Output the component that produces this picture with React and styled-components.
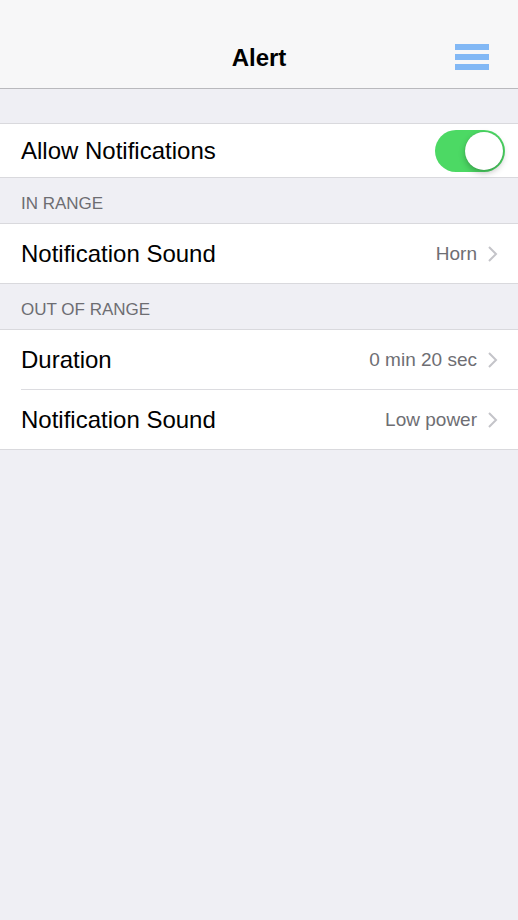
import React from "react";
import styled, { createGlobalStyle } from "styled-components";

const GlobalStyle = createGlobalStyle`
  html, body {
    margin: 0;
    padding: 0;
    background: #efeff4;
    font-family: "Liberation Sans", Arial, sans-serif;
  }
`;

const Page = styled.div`
  width: 518px;
  min-height: 920px;
  background: #efeff4;
`;

const NavBar = styled.header`
  height: 89px;
  box-sizing: border-box;
  padding-top: 28px;
  background: #f7f7f8;
  border-bottom: 1px solid #b9b9bd;
  display: flex;
  align-items: center;
  justify-content: center;
  position: relative;
`;

const Title = styled.h1`
  margin: 0;
  font-size: 24px;
  font-weight: bold;
  color: #000;
`;

const MenuButton = styled.button`
  position: absolute;
  right: 29px;
  top: 44px;
  width: 34px;
  padding: 0;
  border: none;
  background: transparent;
  display: flex;
  flex-direction: column;
  gap: 4px;
  cursor: pointer;
`;

const MenuBar = styled.span`
  display: block;
  height: 6px;
  background: #82b8f5;
`;

const Spacer = styled.div`
  height: 34px;
`;

const Group = styled.section`
  background: #fff;
  border-top: 1px solid #d9d9dd;
  border-bottom: 1px solid #d9d9dd;
`;

const Row = styled.div`
  height: ${(p) => p.$height || 59}px;
  display: flex;
  align-items: center;
  margin-left: 21px;
  padding-right: 20px;
  border-top: ${(p) => (p.$divider ? "1px solid #dcdce0" : "none")};
`;

const Label = styled.span`
  flex: 1;
  font-size: 24px;
  color: #000;
`;

const Value = styled.span`
  font-size: 19px;
  color: #6e6e73;
  margin-right: 10px;
`;

const Chevron = styled.svg`
  width: 11px;
  height: 18px;
`;

const SectionHeader = styled.div`
  height: 45px;
  box-sizing: border-box;
  display: flex;
  align-items: flex-end;
  padding: 0 0 9px 21px;
  font-size: 17px;
  color: #6d6d72;
`;

const Toggle = styled.div`
  width: 70px;
  height: 42px;
  border-radius: 21px;
  background: ${(p) => (p.$on ? "#4cd964" : "#e5e5ea")};
  position: relative;
  margin-right: -7px;
`;

const Knob = styled.div`
  position: absolute;
  top: 2px;
  left: ${(p) => (p.$on ? "30px" : "2px")};
  width: 38px;
  height: 38px;
  border-radius: 50%;
  background: #fff;
  box-shadow: 0 3px 6px rgba(0, 0, 0, 0.25), 0 0 1px rgba(0, 0, 0, 0.2);
`;

const ChevronIcon = () => (
  <Chevron viewBox="0 0 11 18">
    <path d="M2 2 L9 9 L2 16" fill="none" stroke="#c4c4c9" strokeWidth="2" />
  </Chevron>
);

const LinkRow = ({ label, value, divider }) => (
  <Row $divider={divider}>
    <Label>{label}</Label>
    <Value>{value}</Value>
    <ChevronIcon />
  </Row>
);

export default function App() {
  return (
    <Page>
      <GlobalStyle />
      <NavBar>
        <Title>Alert</Title>
        <MenuButton aria-label="Menu">
          <MenuBar />
          <MenuBar />
          <MenuBar />
        </MenuButton>
      </NavBar>
      <Spacer />
      <Group>
        <Row $height={53}>
          <Label>Allow Notifications</Label>
          <Toggle $on>
            <Knob $on />
          </Toggle>
        </Row>
      </Group>
      <SectionHeader>IN RANGE</SectionHeader>
      <Group>
        <LinkRow label="Notification Sound" value="Horn" />
      </Group>
      <SectionHeader>OUT OF RANGE</SectionHeader>
      <Group>
        <LinkRow label="Duration" value="0 min 20 sec" />
        <LinkRow label="Notification Sound" value="Low power" divider />
      </Group>
    </Page>
  );
}
